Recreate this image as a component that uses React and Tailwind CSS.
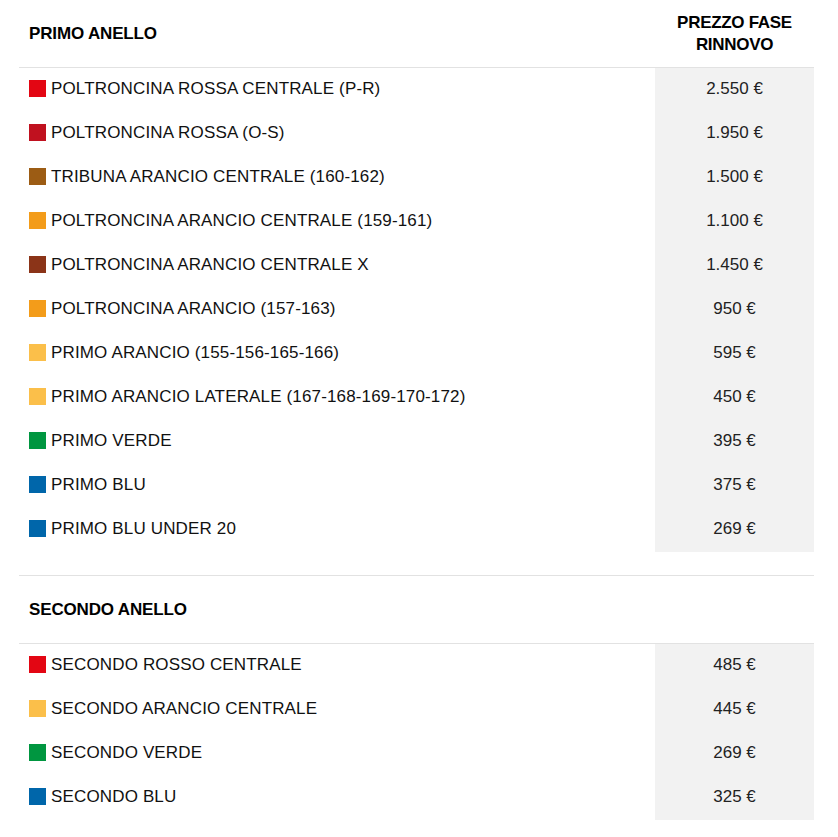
import React from "react";

const primo = [
  ["#e30613", "POLTRONCINA ROSSA CENTRALE (P-R)", "2.550 €"],
  ["#c0111f", "POLTRONCINA ROSSA (O-S)", "1.950 €"],
  ["#9c5c14", "TRIBUNA ARANCIO CENTRALE (160-162)", "1.500 €"],
  ["#f39c1a", "POLTRONCINA ARANCIO CENTRALE (159-161)", "1.100 €"],
  ["#8b3418", "POLTRONCINA ARANCIO CENTRALE X", "1.450 €"],
  ["#f39c1a", "POLTRONCINA ARANCIO (157-163)", "950 €"],
  ["#fbbf4a", "PRIMO ARANCIO (155-156-165-166)", "595 €"],
  ["#fbbf4a", "PRIMO ARANCIO LATERALE (167-168-169-170-172)", "450 €"],
  ["#009640", "PRIMO VERDE", "395 €"],
  ["#0066aa", "PRIMO BLU", "375 €"],
  ["#0066aa", "PRIMO BLU UNDER 20", "269 €"],
];

const secondo = [
  ["#e30613", "SECONDO ROSSO CENTRALE", "485 €"],
  ["#fbbf4a", "SECONDO ARANCIO CENTRALE", "445 €"],
  ["#009640", "SECONDO VERDE", "269 €"],
  ["#0066aa", "SECONDO BLU", "325 €"],
];

function Row({ color, label, price }) {
  return (
    <div className="flex h-[44px]">
      <div className="flex flex-1 items-center pb-[4px] pl-[10px]">
        <span className="mr-[5px] h-[17px] w-[17px] shrink-0" style={{ backgroundColor: color }} />
        <span className="inline-block pt-[2px] text-[17px] tracking-[0.15px] text-[#111]">{label}</span>
      </div>
      <div className="flex w-[159px] items-center justify-center bg-[#f2f2f2] pb-[3px] text-[17px] text-[#222]">
        {price}
      </div>
    </div>
  );
}

export default function App() {
  return (
    <div
      className="min-h-[837px] bg-white px-[19px]"
      style={{ fontFamily: '"Liberation Sans", Arial, sans-serif' }}
    >
      <div className="w-[795px]">
        <div className="flex h-[68px] border-b border-[#e2e2e2]">
          <div className="flex flex-1 items-center pl-[10px] text-[17px] font-bold tracking-[-0.15px] text-black">
            PRIMO ANELLO
          </div>
          <div className="flex w-[159px] items-center justify-center text-center text-[17px] font-bold leading-[22px] tracking-[-0.3px] text-black">
            PREZZO FASE
            <br />
            RINNOVO
          </div>
        </div>
        {primo.map(([c, l, p], i) => (
          <Row key={i} color={c} label={l} price={p} />
        ))}
        <div className="h-[23px]" />
        <div className="flex h-[69px] items-center border-y border-[#e2e2e2] pl-[10px] text-[17px] font-bold tracking-[-0.15px] text-black">
          SECONDO ANELLO
        </div>
        {secondo.map(([c, l, p], i) => (
          <Row key={i} color={c} label={l} price={p} />
        ))}
      </div>
    </div>
  );
}
